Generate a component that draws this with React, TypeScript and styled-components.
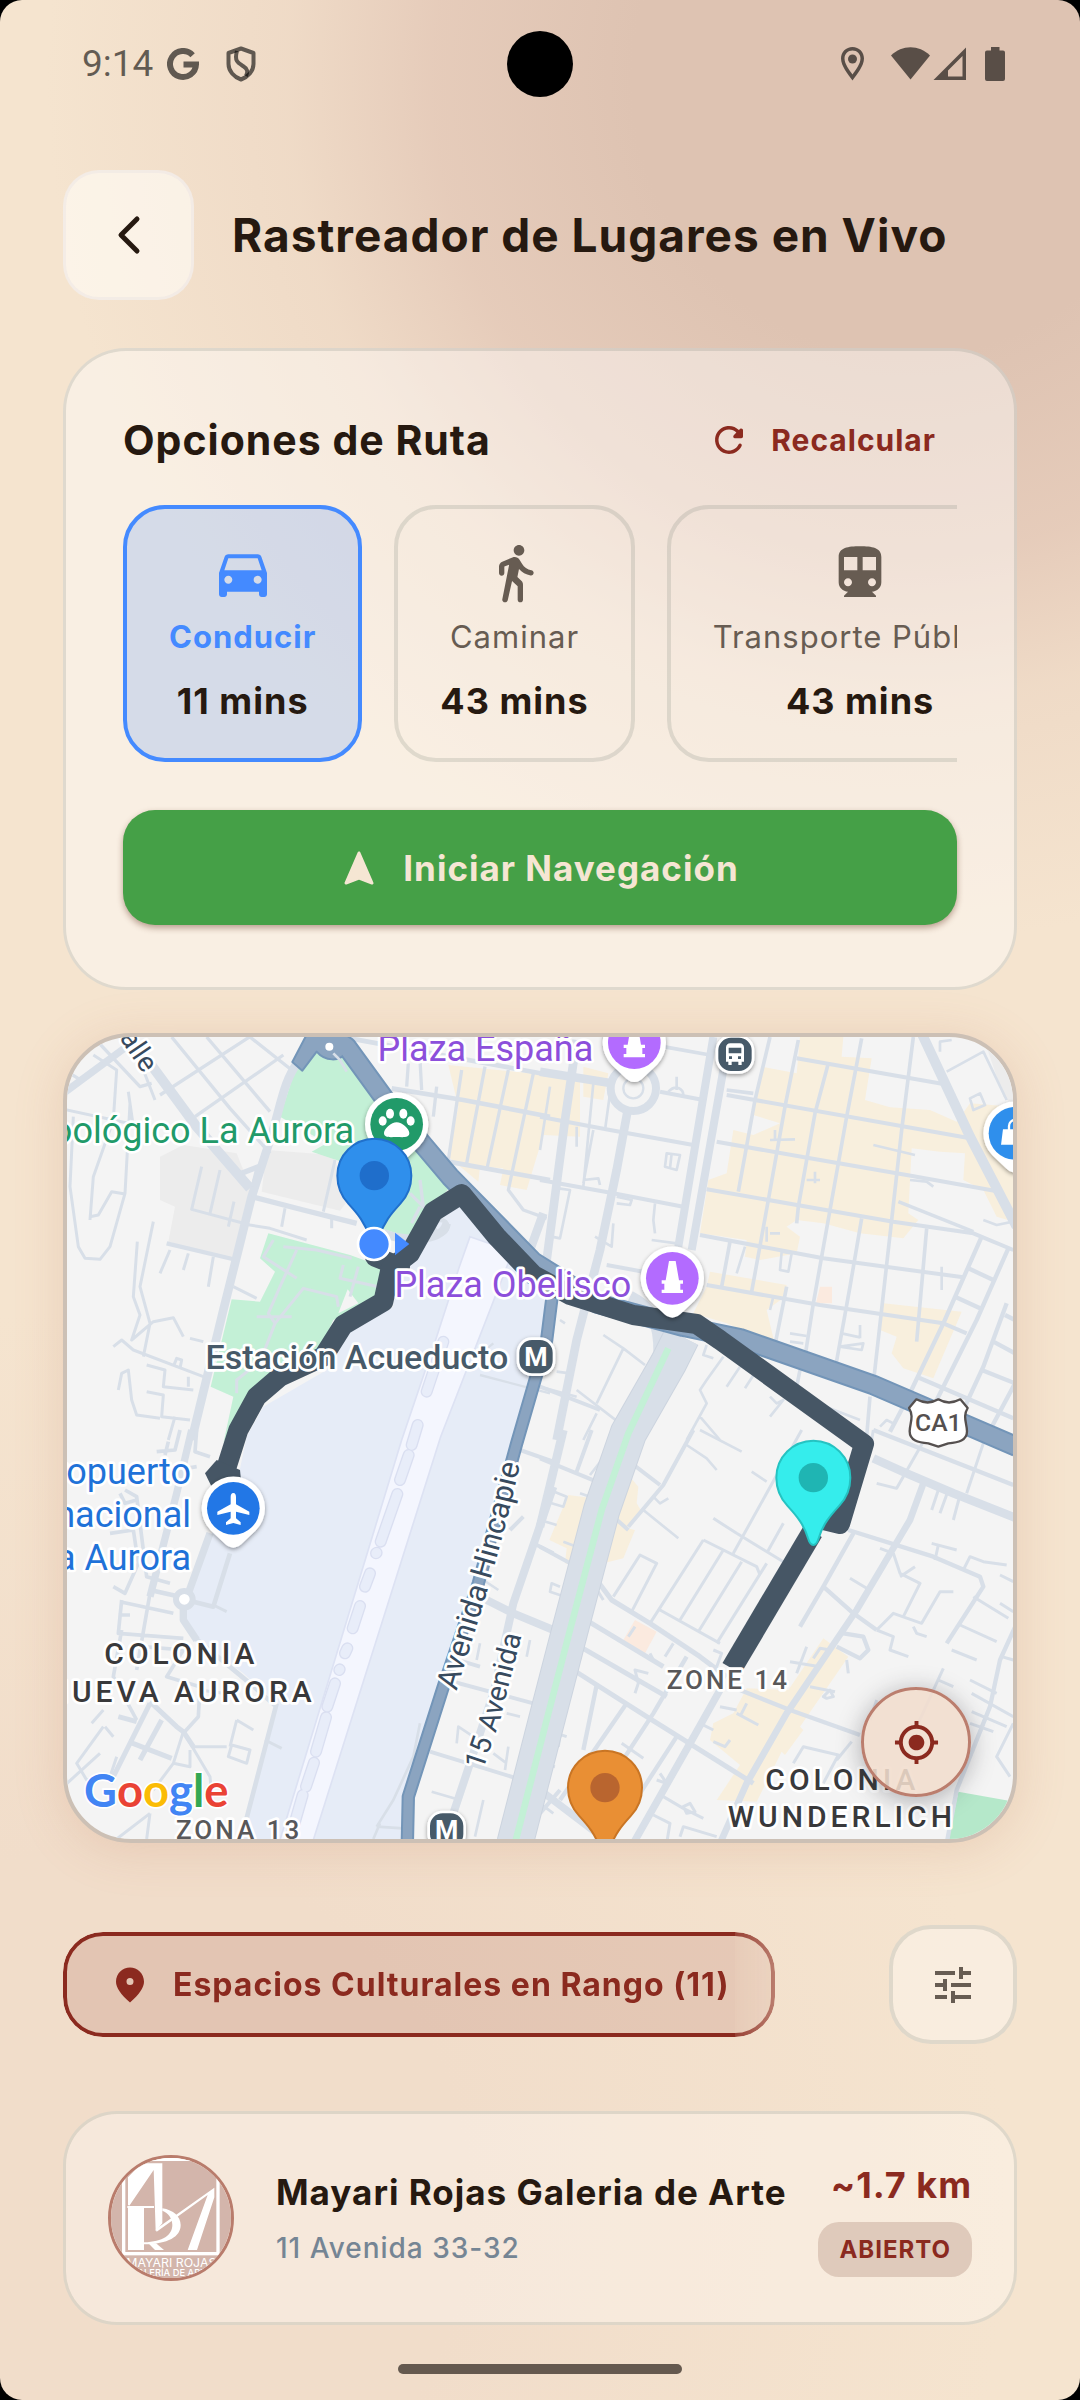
import React from "react";
import styled, { createGlobalStyle } from "styled-components";
import {
  MdDirectionsCar,
  MdDirectionsSubway,
  MdMyLocation,
  MdTune,
} from "react-icons/md";

const GlobalStyle = createGlobalStyle`
  * {
    box-sizing: border-box;
  }

  body {
    margin: 0;
    background: #000000;
  }

  button {
    font-family: inherit;
    cursor: pointer;
  }
`;

const ink = "#261910";
const brick = "#8b2a1f";
const muted = "#675c52";
const line = "rgba(120, 130, 120, 0.2)";

const Screen = styled.div`
  display: flex;
  flex-direction: column;
  min-height: 100vh;
  overflow: hidden;

  border-radius: 22px;
  background: radial-gradient(
      circle 860px at 84% 80px,
      #dec3b2 0%,
      #dec3b2 32%,
      rgba(228, 201, 184, 0.9) 55%,
      rgba(235, 212, 193, 0.6) 72%,
      rgba(245, 228, 207, 0) 100%
    ),
    radial-gradient(
      circle 900px at 10% 92%,
      #f1ddca 0%,
      #f1ddca 40%,
      rgba(245, 228, 207, 0) 100%
    ),
    #f5e4cf;
  color: ${ink};
  font-family: "Inter", "Liberation Sans", sans-serif;
`;

const StatusBar = styled.div`
  display: grid;
  grid-template-columns: 1fr auto 1fr;
  align-items: center;
  height: 128px;
  padding: 0 74px;

  color: rgba(0, 0, 0, 0.6);
`;

const StatusGroup = styled.div<{ $end?: boolean }>`
  display: flex;
  align-items: center;
  justify-content: ${(props) => (props.$end ? "flex-end" : "flex-start")};
  padding-left: 8px;
`;

const Clock = styled.span`
  margin-right: 14px;

  font-family: "Roboto", sans-serif;
  font-size: 37px;
  line-height: 44px;
`;

const CameraHole = styled.div`
  width: 66px;
  height: 66px;

  border-radius: 50%;
  background: #000000;
`;

const Header = styled.header`
  display: flex;
  align-items: center;
  gap: 38px;
  padding: 42px 63px 0;
`;

const BackButton = styled.button`
  display: flex;
  align-items: center;
  justify-content: center;
  width: 131px;
  height: 130px;
  padding: 0;

  border: 3px solid rgba(225, 220, 225, 0.3);
  border-radius: 36px;
  background: rgba(255, 252, 246, 0.64);
  color: ${ink};
`;

const PageTitle = styled.h1`
  margin: 0;

  font-size: 46px;
  font-weight: 700;
  line-height: 60px;
  letter-spacing: 1px;
`;

const Main = styled.main`
  display: flex;
  flex-direction: column;
  padding: 48px 63px 0;
`;

const OptionsCard = styled.section`
  padding: 45px 57px 62px;

  border: 3px solid ${line};
  border-radius: 63px;
  background: rgba(255, 255, 255, 0.42);
`;

const OptionsHeader = styled.div`
  display: flex;
  align-items: center;
  justify-content: space-between;
  height: 88px;
`;

const OptionsTitle = styled.h2`
  margin: 0;

  font-size: 41px;
  font-weight: 700;
  line-height: 52px;
  letter-spacing: 1px;
`;

const RecalcButton = styled.button`
  display: flex;
  align-items: center;
  gap: 21px;
  padding: 12px 21px;

  border: none;
  background: none;
  color: ${brick};
  font-size: 30px;
  font-weight: 700;
  line-height: 44px;
  letter-spacing: 1px;
`;

const ModeRow = styled.div`
  display: flex;
  gap: 32px;
  margin-top: 21px;
  overflow: hidden;
`;

const ModeButton = styled.button<{ $active: boolean }>`
  display: flex;
  flex: none;
  flex-direction: column;
  align-items: center;
  min-width: 239px;
  padding: 32px 42px 35px;

  border: 4px solid ${(props) => (props.$active ? "#448aff" : line)};
  border-radius: 42px;
  background: ${(props) =>
    props.$active ? "rgba(68, 138, 255, 0.2)" : "transparent"};
  color: ${(props) => (props.$active ? "#448aff" : muted)};
`;

const ModeLabel = styled.span<{ $active: boolean }>`
  margin-top: 10px;

  font-size: 31px;
  font-weight: ${(props) => (props.$active ? 700 : 400)};
  line-height: 44px;
  letter-spacing: 1px;
  white-space: nowrap;
`;

const ModeTime = styled.span`
  margin-top: 20px;

  color: ${ink};
  font-size: 36px;
  font-weight: 700;
  line-height: 44px;
  letter-spacing: 1px;
`;

const StartButton = styled.button`
  display: flex;
  align-items: center;
  justify-content: center;
  gap: 26px;
  width: 100%;
  height: 115px;
  margin-top: 48px;

  border: none;
  border-radius: 32px;
  background: #45a047;
  box-shadow: 0 3px 6px rgba(90, 40, 20, 0.4);
  color: #f5e6d3;
  font-size: 35px;
  font-weight: 700;
  letter-spacing: 1px;
`;

const MapFrame = styled.section`
  position: relative;
  height: 810px;
  margin-top: 43px;
  overflow: hidden;

  border: 4px solid #ccc0b5;
  border-radius: 68px;
  background: #f4f4f4;
  box-shadow: 0 6px 50px rgba(190, 120, 90, 0.2);

  > svg {
    display: block;
    width: 100%;
    height: 100%;
  }
`;

const LocateButton = styled.button`
  position: absolute;
  right: 42px;
  bottom: 42px;
  display: flex;
  align-items: center;
  justify-content: center;
  width: 110px;
  height: 110px;
  padding: 0;

  border: 3px solid #bb7e6e;
  border-radius: 50%;
  background: rgba(241, 221, 205, 0.88);
  box-shadow: 0 4px 24px rgba(40, 40, 50, 0.35);
  color: ${brick};
`;

const FilterRow = styled.div`
  display: flex;
  align-items: center;
  justify-content: space-between;
  margin-top: 82px;
`;

const RangeChip = styled.button`
  display: flex;
  align-items: center;
  gap: 22px;
  height: 105px;
  padding: 0 42px;

  border: 4px solid ${brick};
  border-radius: 40px;
  background: rgba(139, 42, 31, 0.13);
  color: ${brick};
  font-size: 32px;
  font-weight: 700;
  letter-spacing: 1px;
  mask-image: linear-gradient(
    to right,
    #000 calc(100% - 40px),
    rgba(0, 0, 0, 0.88) calc(100% - 40px),
    rgba(0, 0, 0, 0.55) 100%
  );
`;

const TuneButton = styled.button`
  display: flex;
  align-items: center;
  justify-content: center;
  width: 128px;
  height: 119px;
  padding: 0;

  border: 4px solid ${line};
  border-radius: 42px;
  background: rgba(255, 250, 246, 0.42);
  color: ${muted};
`;

const PlaceCard = styled.article`
  display: flex;
  align-items: center;
  margin-top: 67px;
  padding: 41px 42px;

  border: 3px solid ${line};
  border-radius: 54px;
  background: rgba(255, 250, 246, 0.4);
`;

const Avatar = styled.div`
  flex: none;
  width: 126px;
  height: 126px;
  overflow: hidden;

  border: 3px solid #b97c6c;
  border-radius: 50%;

  svg {
    display: block;
  }
`;

const PlaceInfo = styled.div`
  display: flex;
  flex: 1;
  flex-direction: column;
  gap: 12px;
  margin-left: 42px;
`;

const PlaceName = styled.h3`
  margin: 0;

  font-size: 35px;
  font-weight: 700;
  line-height: 48px;
  letter-spacing: 1px;
  white-space: nowrap;
`;

const PlaceAddress = styled.span`
  color: #758594;
  font-size: 28px;
  font-weight: 500;
  line-height: 40px;
  letter-spacing: 1px;
`;

const PlaceMeta = styled.div`
  display: flex;
  flex-direction: column;
  align-items: flex-end;
  gap: 15px;
  padding-top: 4px;
`;

const Distance = styled.span`
  color: ${brick};
  font-size: 36px;
  font-weight: 700;
  line-height: 44px;
  letter-spacing: 1px;
`;

const OpenBadge = styled.span`
  padding: 0 21px;

  border-radius: 21px;
  background: #dfcabb;
  color: ${brick};
  font-size: 24px;
  font-weight: 700;
  line-height: 55px;
  letter-spacing: 1px;
`;

const HomeIndicator = styled.div`
  width: 284px;
  height: 10px;
  margin: auto auto 26px;

  border-radius: 5px;
  background: #65594f;
`;

const GoogleIcon = () => (
  <svg width="32" height="33" viewBox="0 0 32 33" fill="none">
    <path
      d="M25.6 7.2A13 13 0 1 0 29 16.5H16.5"
      stroke="currentColor"
      strokeWidth="6"
    />
  </svg>
);

const ShieldIcon = () => (
  <svg
    width="30"
    height="36"
    viewBox="0 0 30 36"
    fill="none"
    stroke="currentColor"
    strokeWidth="4"
    strokeLinejoin="round"
    style={{ marginLeft: 27 }}>
    <path d="M15 2.500 27.500 7V18C27.500 25 22 31 15 33.500 8 31 2.500 25 2.500 18V7Z" />
    <path d="M11 5C8 15 12 17 17 20 22 23 22 26 20 30" />
  </svg>
);

const StatusIcons = () => (
  <svg width="165" height="34" viewBox="841 47 165 34" fill="currentColor">
    <path
      fillRule="evenodd"
      d="M852.500 47C859 47 864 52 864 58.500 864 66 857 74 852.500 80.500 848 74 841 66 841 58.500 841 52 846 47 852.500 47ZM852.500 50.500C848 50.500 844.500 54 844.500 58.500 844.500 64 849.500 70 852.500 74.500 855.500 70 860.500 64 860.500 58.500 860.500 54 857 50.500 852.500 50.500Z"
    />
    <circle cx="852.500" cy="59" r="4.500" />
    <path d="M891 55.500C902 44.500 919 44.500 930 55.500L910.500 79.500Z" />
    <path
      fillRule="evenodd"
      d="M966 47.500V80H933.500ZM962.500 56 948 70.500V76.500H962.500Z"
    />
    <path d="M991 47H999.500V50.500H1003A2 2 0 0 1 1005 52.500V79A2 2 0 0 1 1003 81H987A2 2 0 0 1 985 79V52.500A2 2 0 0 1 987 50.500H991Z" />
  </svg>
);

const ChevronIcon = () => (
  <svg width="24" height="40" viewBox="0 0 24 40" fill="none">
    <path
      d="M20 4 4 20l16 16"
      stroke="currentColor"
      strokeWidth="5"
      strokeLinecap="round"
      strokeLinejoin="round"
    />
  </svg>
);

const RefreshIcon = () => (
  <svg width="42" height="42" viewBox="0 0 24 24" fill="currentColor">
    <path d="M17.65 6.35c-1.63-1.63-3.94-2.57-6.48-2.31-3.67.37-6.69 3.35-7.1 7.02C3.520 15.910 7.270 20 12 20c3.190 0 5.930-1.870 7.210-4.560.32-.67-.16-1.440-.9-1.440-.37 0-.72.2-.88.53-1.130 2.430-3.840 3.970-6.800 3.310-2.220-.49-4.010-2.300-4.480-4.520C5.310 9.440 8.260 6 12 6c1.660 0 3.140.69 4.220 1.780l-1.510 1.510c-.63.63-.19 1.710.7 1.710H19c.55 0 1-.45 1-1V6.410c0-.89-1.080-1.340-1.710-.71l-.64.65z" />
  </svg>
);

const WalkIcon = () => (
  <svg width="64" height="64" viewBox="0 0 24 24" fill="currentColor">
    <path d="M13.500 5.500c1.100 0 2-.9 2-2s-.9-2-2-2-2 .9-2 2 .9 2 2 2zM9.800 8.900L7.240 21.810c-.13.61.35 1.190.98 1.190h.08c.47 0 .87-.32.98-.78L10.900 15l2.100 2v5c0 .55.45 1 1 1s1-.45 1-1v-5.640c0-.55-.22-1.070-.62-1.450L12.900 13.500l.6-3c1.070 1.240 2.620 2.130 4.360 2.410.6.09 1.140-.39 1.140-1 0-.49-.36-.9-.85-.98-1.520-.25-2.780-1.150-3.450-2.330l-1-1.600c-.56-.89-1.680-1.250-2.660-.84L7.220 7.780C6.480 8.100 6 8.820 6 9.620V12c0 .55.45 1 1 1s1-.45 1-1V9.600l1.800-.7z" />
  </svg>
);

const ArrowIcon = () => (
  <svg width="36" height="42" viewBox="0 0 36 42" fill="currentColor">
    <path
      d="M18 6 31 36 18 31 5 36Z"
      stroke="currentColor"
      strokeWidth="3"
      strokeLinejoin="round"
    />
  </svg>
);

const PlaceIcon = () => (
  <svg width="42" height="42" viewBox="0 0 24 24" fill="currentColor">
    <path d="M12 2c-4.200 0-8 3.220-8 8.200 0 3.320 2.670 7.250 8 11.800 5.330-4.550 8-8.480 8-11.800C20 5.220 16.200 2 12 2zm0 10a2 2 0 1 1 0-4 2 2 0 0 1 0 4z" />
  </svg>
);

const GalleryLogo = () => (
  <svg width="120" height="120" viewBox="213 204 360 360">
    <rect x="200" y="190" width="390" height="390" fill="#d3b5ab" />
    <path d="M240 195H545V213H240Z" fill="#ffffff" />
    <rect
      x="251"
      y="208"
      width="283"
      height="283"
      fill="none"
      stroke="#ffffff"
      strokeWidth="10"
    />
    <g fill="#ffffff">
      <path d="M264 345V262L305 220H367V400L347 424 341 240 268 347Z" />
      <path d="M264 352H312V480H264Z" />
      <path d="M262 348H342V354H262ZM367 355C400 360 422 380 422 405 422 440 385 462 312 463V457C370 455 397 435 397 405 397 385 385 368 367 362Z" />
      <path d="M325 460H348L372 480H345Z" />
      <path d="M523 293V322L471 480H443L503 315 350 425 347 418Z" />
    </g>
    <g fill="#ffffff" fontFamily="Inter, sans-serif" textAnchor="middle">
      <text x="394" y="531" fontSize="37">
        MAYARI ROJAS
      </text>
      <text x="394" y="558" fontSize="28" fontWeight="500">
        GALERÍA DE ARTE
      </text>
    </g>
  </svg>
);

type Street = [number, string];

// Streets are drawn per quadrant of the map: stroke width and path
const streets: { x: number; y: number; list: Street[] }[] = [
  {
    x: 0,
    y: 0,
    list: [
      [22, "M40 220 250 65"],
      [30, "M300 130 440 320 600 505"],
      [10, "M365 51 540 265 660 400M470 51 660 275M330 225 600 50M435 290 700 105M600 51 725 150M60 160 100 185M130 51 270 200 305 190"],
      [9, "M130 105 200 150 190 300 130 470 120 600M50 270 235 310M70 290 60 500 85 680 105 715 150 718 180 680 225 520 240 250M120 590 145 585 185 515 225 522M235 215 250 320M280 150 315 240"],
      [26, "M745 125C700 180 690 270 660 360L605 530 520 870 425 1260"],
      [16, "M575 460 625 440 610 500M605 530 760 570 920 610"],
      [9, "M455 440 425 568 600 615 660 625 770 660M510 450 480 580M552 545 535 620M820 575 855 420M705 565 695 620M845 590V625"],
      [13, "M350 670 560 720"],
      [9, "M360 690 330 760M415 700 400 750M490 710 475 800M310 605 270 800 300 910 280 1010M262 665 250 830 270 885 245 960 310 905 370 893 400 950M550 800 620 835M190 980 215 960 250 990 460 1070M370 1040 380 1015 395 1020 390 1045M290 1035 345 1050 340 1100 430 1110M290 1115 340 1125 335 1190 420 1200M205 1110 215 1060 235 1050 245 1140 260 1185 330 1195M375 1190 355 1260M415 1070V1100M420 955 460 965"],
      [9, "M670 660 640 710 740 775M700 680 800 690 905 715M740 690 690 800 655 880 675 910 640 1000M675 910 760 805 860 830 865 860M620 890H725M880 735 870 775 985 800M925 740 900 830M610 1040 560 1080V1120"],
      [10, "M1080 520 1120 560 1110 480M1110 560 1085 610"],
      [14, "M1025 205 1240 240 1500 290M1195 425 1500 480M900 55 1500 165"],
      [10, "M1235 150 1195 420M1305 140 1250 430M1375 150 1310 450M1450 160 1375 510 1420 570 1490 595M1110 120 1115 210M1075 130 1070 200M1160 200 1150 290"],
      [26, "M1000 640C1080 670 1180 660 1190 610M1440 690 1480 580"],
      [7, "M1290 1065 1500 1120M1330 970 1280 1010"],
    ],
  },
  {
    x: 1470,
    y: 0,
    list: [
      [26, "M0 155 215 190M110 60 75 300 20 720M265 260 230 450 180 690 110 960 50 1260"],
      [24, "M520 51 415 680M550 150 455 690"],
      [12, "M360 215 490 240M560 225 1290 355M770 115 1210 192M0 290 210 330 460 375M530 365 810 415 1100 465 1380 515M0 480 220 520 430 560M500 508 870 572 1060 605 1300 640 1420 690M480 645 850 715 1270 772M500 795 840 855 1210 910 1280 940M200 735 310 755"],
      [11, "M690 51 645 240 595 515M775 60 735 260 685 540 635 815M865 130 825 280 775 560 770 610M965 55 920 290 870 570 820 850 795 1010M1120 51 1085 330 1055 600 1000 1090M965 595 930 800 885 1050M1160 625 1130 965M740 800 705 975M570 665 545 800M1075 545 1300 635M370 80 510 105M560 210 640 220M780 1050 770 1100M990 1130 980 1250"],
      [30, "M1145 40 1290 350 1430 620"],
      [13, "M1325 650 1210 910 1100 1140 1050 1235M1405 685 1310 900 1180 1160M1285 745 1360 780M1245 830 1320 865M1130 1070 1420 1195M1400 850 1330 1040 1270 1170M1395 885 1425 900M1360 965 1425 1000M1325 1050 1425 1090M1425 1090 1345 1240"],
      [8, "M160 190 130 500M210 220 195 330M160 330 130 490M410 170V210M385 215C410 190 430 210 430 225M30 200 0 390M110 320V380M1200 95V65L1235 60M1220 155 1330 95 1400 240M1290 235 1320 220 1335 255 1300 270Z M690 360 765 358M705 330V360M1000 375 1125 405M825 455V490M800 480H840M380 400 375 440 410 450 420 405ZM395 400 390 445M130 480 175 475 180 495M345 550 340 600 345 640M55 505 90 510 60 655 35 650M230 530 275 540 270 555 230 550M335 660 410 670M615 680 590 760M680 620V665M690 640H720M725 695 720 750 745 755 755 700ZM1205 740V810M750 940 800 948M750 965 790 970M905 940 960 952M960 915V955M900 980 970 970 965 990ZM1110 480 1160 485 1180 500M1330 600 1370 615 1420 605M190 945 250 985 315 1035M250 985 170 1150M550 1010 500 1080 480 1110 500 1150 440 1260M600 1040 560 1100M650 1050 615 1105M690 1130 710 1150 730 1140 690 1190M480 1190 540 1260M0 1100 110 1130M110 1110 240 1210M170 1180 130 1260M60 900 75 910M50 1055 90 1060M500 975 490 1005 520 1015M830 1150 960 1200M1020 1220 1040 1200 1060 1210M700 830 690 870M220 610 215 680 165 650"],
      [36, "M270 830C330 860 360 900 358 1000L300 1110 225 1260"],
      [12, "M0 1100 180 1170"],
    ],
  },
  {
    x: 0,
    y: 1230,
    list: [
      [22, "M425 0 380 190 300 500M480 310 415 490M400 530 400 570 440 630"],
      [14, "M430 620 600 760 680 830M300 480 390 500M430 515 490 530 540 370M680 820 570 1240"],
      [11, "M300 490 260 720M215 510 205 610 400 625M210 515 370 550M205 555H240M190 470 225 490 265 400 250 300 180 310M390 0 375 60 320 65M355 35 345 75M440 0 435 65 480 80M210 190 225 220 260 210M225 180 260 200 290 440 360 460M380 120 440 110M215 600 190 740 260 870M280 650 400 660 350 740 450 770 445 860 400 910"],
      [15, "M300 820 180 1060M300 815 380 890 400 905 430 950M335 870 270 990M205 860 260 875M235 935 365 985"],
      [9, "M160 840 125 880M160 890 80 1000 110 1050 180 1040 200 980M165 890 190 920M400 905 370 1000 310 1080M400 905 480 1040 485 1100M430 950H530M560 870 610 900M560 870 540 950M545 945 600 960 590 1000 535 980ZM645 930 695 955M51 1060 150 970M490 525 530 545M370 1000 420 1010V960M300 1150 200 1227M300 1150 290 1227M450 780 520 790M51 1190 160 1220"],
      [24, "M1510 170 1390 520 1330 790 1210 1150M1310 510 1390 550 1510 600"],
      [12, "M1410 60 1510 95M1190 680 1290 710M1190 750 1450 820M1140 965 1400 1045M1420 260 1380 300M1450 340 1510 370"],
      [8, "M1110 880 1090 980 1030 1110 980 1190M980 1190 1060 1195M970 1227 990 1180M1145 1085 1230 1110M1300 1110 1275 1220M1375 950 1365 1020M1330 970 1370 1000M1220 940 1225 890 1270 920M1370 850 1410 860M1440 630 1430 680M1290 640 1280 690M1345 480 1300 450M1470 1120 1510 1150"],
    ],
  },
  {
    x: 1470,
    y: 1230,
    list: [
      [26, "M70 0 0 290"],
      [12, "M0 85 170 155M155 0 110 125M275 100 360 165M460 0 370 165 265 290M220 260 265 300M0 350 100 405M0 1150 60 1080"],
      [8, "M310 240 415 325M440 45 500 85 530 120M150 135 185 90M340 200 360 220 385 205M120 190 150 200M30 180 80 200 70 230 20 215M60 470 35 460 30 485 75 500M0 270 50 285M70 335 110 350M480 0 605 65M635 125 680 155"],
      [15, "M170 450 215 510 330 580 480 680 560 740M130 565 370 710M120 650 380 800M100 720 320 860 640 1060"],
      [13, "M600 780 750 840 960 915M440 680 340 850 190 1080M410 920 300 1090M260 820 60 1110M170 765 130 960"],
      [22, "M540 780 450 940 280 1240M0 1080 210 1240"],
      [9, "M490 330 330 580M550 360 420 570M605 395 475 605M680 400 530 640M490 330 650 410 660 435M360 540 540 640M590 310 730 395M785 0 580 370M730 280 680 370M520 265 590 310M220 500 300 375 350 400 275 545M265 620 285 590M375 680 400 640M330 670 340 690M520 660 545 670 530 710M285 790 295 760 285 720 325 730M165 470 190 510"],
      [26, "M1000 85 1100 130 1240 190 1430 265"],
      [20, "M1150 160 1110 270 950 540 740 850 620 1060 540 1240"],
      [13, "M940 310 850 470 940 550 1010 600M925 300 1180 380 1320 440 1330 470 1220 640M1000 0 1420 165M850 470 780 590M910 610 970 620 985 660 960 685 890 650M1430 580 1380 690 1350 830 1250 1080 1220 1240"],
      [9, "M1170 0 1070 175 1010 160M1200 165 1175 240M1225 180 1200 250M1260 195 1240 270M1330 40 1280 190M1000 0 990 60M1010 600 1060 550 1145 580 1200 485 1240 485M1060 370 1080 430 1140 460 1090 560M1125 410 1080 440M1010 600 1060 620 1050 660 1105 680M1120 590 1130 610 1160 620M1300 500 1405 565M1260 585 1370 635M1235 660 1310 690M1210 715 1130 890M1195 750 1240 770M1270 420 1290 380 1330 395 1400 405M1380 435 1420 455M1380 520 1420 545M1175 340 1250 360M1195 345 1185 390M1010 810 990 870M930 445 980 475M1020 355 1060 370M1385 680 1420 690M1290 750 1370 790M1295 790 1420 860M1295 845 1400 890M1290 880 1360 905M1420 880 1370 980 1410 1040M810 770 885 785M850 800 870 780 880 800 860 805ZM750 695 840 710M800 650 770 730M820 685 840 655 870 660M920 690 925 730M590 850 655 885M620 820 600 860M520 935 555 950 570 930M760 1000 790 950 895 975 850 1060M935 935 890 990M245 940 310 985M370 1100 430 1135 490 1165M430 1130 450 1120 465 1145 440 1150ZM340 1155 390 1180 380 1240M420 1220 430 1190 530 1220M480 880 520 900M540 830 590 840M360 1030 380 1060 350 1050M50 910 80 920M60 915 55 950M0 1000 45 1010"],
    ],
  },
];

interface PinProps {
  x: number;
  y: number;
  color: string;
  children?: React.ReactNode;
}

const PoiPin = ({ x, y, color, children }: PinProps) => (
  <g transform={`translate(${x} ${y})`}>
    <path
      d="M0 118C-12 118-22 110-30 102L-68 66A95 95 0 1 1 68 66L30 102C22 110 12 118 0 118Z"
      fill="#ffffff"
      filter="url(#drop)"
    />
    <circle r="79" fill={color} />
    <g fill="#ffffff">{children}</g>
  </g>
);

interface MarkerProps {
  x: number;
  y: number;
  fill: string;
  edge: string;
  dot: string;
}

const Marker = ({ x, y, fill, edge, dot }: MarkerProps) => (
  <g transform={`translate(${x} ${y})`}>
    <path
      d="M0 202C-8 202-13 192-16 182-28 140-50 115-78 84-100 60-111 32-111 0A111 111 0 0 1 111 0C111 32 100 60 78 84 50 115 28 140 16 182 13 192 8 202 0 202Z"
      fill={fill}
      stroke={edge}
      strokeWidth="6"
    />
    <circle r="44" fill={dot} />
  </g>
);

const StationBadge = ({ x, y, children }: Omit<PinProps, "color">) => (
  <g transform={`translate(${x} ${y})`}>
    <rect
      x="-54"
      y="-54"
      width="108"
      height="108"
      rx="42"
      fill="#475a69"
      stroke="#ffffff"
      strokeWidth="8"
      filter="url(#drop)"
    />
    {children}
  </g>
);

const MetroLetter = () => (
  <text
    y="28"
    fill="#ffffff"
    fontSize="80"
    fontWeight="700"
    textAnchor="middle">
    M
  </text>
);

const obelisk = "M-10-52H10L20 6H32V16H24V34H32V44H-32V34H-24V16H-32V6H-20Z";

const CityMap = () => (
  <svg
    viewBox="51 51 2838 2406"
    preserveAspectRatio="xMidYMid slice"
    fontFamily="Roboto, sans-serif">
    <defs>
      <filter id="drop" x="-30%" y="-30%" width="160%" height="160%">
        <feDropShadow
          dx="0"
          dy="5"
          stdDeviation="6"
          floodColor="#000000"
          floodOpacity="0.4"
        />
      </filter>
      <path id="hincapie" d="M1220 2014C1270 1840 1350 1620 1424 1270" />
      <path id="quince" d="M1298 2252 1350 2100 1424 1810" />
    </defs>

    <g fill="#ececec">
      <path d="M330 410 400 375 560 400 600 500 560 720 355 665 375 560 330 540Z" />
      <path d="M650 390 850 405 895 540 870 572 635 515Z" />
      <path d="M2800 51H2900V260L2860 230Z" />
    </g>
    <g fill="#f8efdd">
      <path d="M1195 135 1590 175V350L1480 345 1430 510 1350 495 1360 445 1290 440 1285 485 1195 410 1225 260Z" />
      <path d="M1600 140 1675 160 1660 240 1600 230Z" />
      <g transform="translate(1470 0)">
        <path d="M780 51H910L905 110 995 115 975 240 1050 262 1170 270 1250 305 1290 250 1420 260V605L1370 590 1330 510 1270 480 1275 400 1200 395 1115 385 1105 580 1135 600 1090 655 960 640 850 610 770 600 740 620 780 650 770 700 660 720 615 710 620 660 480 640 505 480 560 460 580 330 640 345 720 310 640 285 665 140 770 160Z" />
        <path d="M510 755 740 795 735 830 680 870 705 975 560 910 460 880 500 800Z" />
        <path d="M1030 850 1265 875 1180 1075 1090 1045 1055 1000 1070 950 1020 930Z" />
        <path d="M840 800H876V850H828Z" fill="#fbeadf" />
      </g>
      <g transform="translate(1470 1230)">
        <path d="M85 195 160 205 120 410 75 400 80 355 28 330Z" />
        <path d="M265 135 295 170 290 220 302 240 262 295 285 300 250 385 190 400 230 190Z" />
        <path d="M850 625 925 680 780 890 790 900 735 975 725 965 650 1115 530 1110 600 1005 510 930 520 880 580 850 620 775 745 780Z" />
        <path d="M285 570 350 605 315 670 250 630Z" fill="#fbeadf" />
      </g>
    </g>
    <g fill="#c3f0d6">
      <path d="M800 90 880 105 1110 380 1205 495 1075 650 990 625 920 440 785 395 830 370 690 290 735 150Z" />
      <path d="M655 640 900 705 1010 745 980 840 850 900 800 1010 640 1080 560 1180 520 1270 550 1130 482 1100 545 838 630 845 675 755 630 715Z" />
      <path d="M865 880 893 808 925 850Z" fill="#f4f4f4" />
      <path d="M2725 2315 2890 2345V2457H2695Z" fill="#b5e8ca" />
    </g>

    <path
      d="M1225 550 1480 790 1490 950 1400 1240 1280 1700 1060 2330V2460H570L680 2050 580 1960 440 1860 400 1800V1750L430 1700 490 1530 565 1370 590 1250 640 1160 830 1050 900 930 1030 860 1030 740 1130 640Z"
      fill="#e6ecf7"
    />
    <path
      d="M1260 650 1388 695 1172 1250 790 2460H690L1055 1260 1160 950 1228 740Z"
      fill="#f4f6fe"
      stroke="#dde2f3"
      strokeWidth="5"
    />
    {[
      ["#dadff1", 36],
      ["#e8edf9", 28],
    ].map(([stroke, width]) => (
      <path
        key={stroke}
        d="M1180 965 1130 1115M1103 1215 1085 1275M1076 1305 1050 1380M1042 1422 992 1565M980 1598 978 1600M960 1660 945 1700M930 1758 908 1825M892 1885 885 1900M869 1948 868 1950M855 1990 832 2060M828 2092 798 2195M792 2228 768 2300M758 2325 725 2440"
        fill="none"
        stroke={stroke as string}
        strokeWidth={width as number}
        strokeLinecap="round"
      />
    ))}

    {streets.map(({ x, y, list }) => (
      <g
        key={`${x}-${y}`}
        transform={`translate(${x} ${y})`}
        fill="none"
        stroke="#d8dfe8"
        strokeLinejoin="round">
        {list.map(([width, d]) => (
          <path key={d} d={d} strokeWidth={width} />
        ))}
      </g>
    ))}

    <g fill="none" stroke="#d8dfe8">
      <circle cx="1750" cy="205" r="68" strokeWidth="24" fill="#f4f4f4" />
      <circle cx="1750" cy="205" r="30" strokeWidth="7" />
      <circle cx="403" cy="1738" r="25" strokeWidth="18" fill="#ffffff" />
      <circle cx="1172" cy="620" r="20" strokeWidth="14" />
    </g>

    <g fill="none" strokeLinejoin="round">
      <path
        d="M1895 950 1855 1030 1735 1240 1655 1470 1560 1830 1490 2100 1395 2470"
        stroke="#ccd4df"
        strokeWidth="112"
      />
      <path
        d="M1895 950 1855 1030 1735 1240 1655 1470 1560 1830 1490 2100 1395 2470"
        stroke="#d8dfe8"
        strokeWidth="106"
      />
      <path
        d="M1855 985 1735 1240 1655 1470 1560 1830 1490 2100 1395 2470"
        stroke="#c3f0d6"
        strokeWidth="20"
      />
      <path
        d="M800 20 890 80 1010 245 1200 470 1450 725 1530 775 1640 850 1900 920 2070 955 2470 1095 2900 1280"
        stroke="#7395b8"
        strokeWidth="62"
      />
      <path
        d="M772 40H880L885 100C870 125 825 125 800 95L757 152 727 126Z"
        fill="#8ba4c0"
        stroke="#7395b8"
        strokeWidth="6"
      />
      <path
        d="M800 20 890 80 1010 245 1200 470 1450 725 1530 775 1640 850 1900 920 2070 955 2470 1095 2900 1280"
        stroke="#8ba4c0"
        strokeWidth="50"
      />
      <path
        d="M1510 800 1490 960 1400 1270 1285 1690 1180 2000 1075 2330 1072 2470"
        stroke="#7395b8"
        strokeWidth="40"
      />
      <path
        d="M1510 800 1490 960 1400 1270 1285 1690 1180 2000 1075 2330 1072 2470"
        stroke="#8ba4c0"
        strokeWidth="28"
      />
      <circle cx="838" cy="80" r="12" fill="#ffffff" />
      <path d="M850 100 870 120 890 155" stroke="#d8dfe8" strokeWidth="8" />
    </g>

    <g
      fill="none"
      stroke="#465665"
      strokeWidth="60"
      strokeLinejoin="round">
      <path d="M975 710 1050 740" strokeLinecap="round" />
      <path d="M518 1390 530 1340 565 1230 620 1130 690 1070 820 1010 880 915 1000 845 1022 745 1080 700 1150 575 1235 522 1340 650 1450 765 1560 825 1750 885 1940 912 2010 960 2442 1272 2370 1512 2320 1500" />
      <path d="M2288 1535 2045 1945" strokeWidth="64" />
      <path
        d="M465 1360 500 1320 570 1350 575 1400 485 1400Z"
        fill="#465665"
        stroke="none"
      />
    </g>

    <g
      stroke="#ffffff"
      strokeWidth="16"
      strokeLinejoin="round"
      paintOrder="stroke">
      <g fontSize="108">
        <text x="912" y="370" fill="#219a69" textAnchor="end">
          Zoológico La Aurora
        </text>
        <text x="1630" y="123" fill="#8c4fdb" textAnchor="end">
          Plaza España
        </text>
        <text x="1744" y="830" fill="#8c4fdb" textAnchor="end">
          Plaza Obelisco
        </text>
        <g fill="#1f72d8" textAnchor="end">
          <text x="423" y="1393">Aeropuerto</text>
          <text x="423" y="1521">Internacional</text>
          <text x="423" y="1651">La Aurora</text>
        </g>
      </g>
      <text
        x="1375"
        y="1048"
        fill="#475a69"
        fontSize="102"
        fontWeight="500"
        textAnchor="end">
        Estación Acueducto
      </text>
      <g fill="#39393b" fontSize="90" fontWeight="500" letterSpacing="12">
        <text x="163" y="1932">COLONIA</text>
        <text x="797" y="2045" textAnchor="end">
          NUEVA AURORA
        </text>
        <text x="2146" y="2310">COLONIA</text>
        <text x="2033" y="2420">WUNDERLICH</text>
      </g>
      <g fill="#58585a" fontSize="78" fontWeight="500" letterSpacing="9">
        <text x="378" y="2457">ZONA 13</text>
        <text x="1850" y="2008">ZONE 14</text>
      </g>
      <g fill="#374a5e">
        <text fontSize="92">
          <textPath href="#hincapie">Avenida Hincapie</textPath>
        </text>
        <text fontSize="86">
          <textPath href="#quince">15 Avenida</textPath>
        </text>
        <text
          fontSize="84"
          textAnchor="end"
          transform="translate(280 162) rotate(56)">
          Calle
        </text>
      </g>
    </g>

    <StationBadge x={1458} y={1010}>
      <MetroLetter />
    </StationBadge>
    <StationBadge x={1190} y={2430}>
      <MetroLetter />
    </StationBadge>
    <StationBadge x={2055} y={103}>
      <path
        fillRule="evenodd"
        fill="#ffffff"
        d="M-14-33H14C22-33 27-28 27-20V22H20V32H10V22H-10V32H-20V22H-27V-20C-27-28-22-33-14-33ZM-19-20V-3H19V-20ZM-18 6V14H-9V6ZM9 6V14H18V6Z"
      />
    </StationBadge>

    <PoiPin x={1753} y={68} color="#b36bff">
      <path d={obelisk} />
    </PoiPin>
    <PoiPin x={1867} y={775} color="#b36bff">
      <path d={obelisk} />
    </PoiPin>
    <PoiPin x={2895} y={340} color="#2f8fec">
      <path d="M-36-12H36L42 34H-42Z" />
      <path
        d="M-18-10V-22A18 18 0 0 1 18-22V-10"
        fill="none"
        stroke="#ffffff"
        strokeWidth="7"
      />
    </PoiPin>
    <PoiPin x={550} y={1465} color="#2277e6">
      <path d="M0-46C6-46 8-40 8-34V-12L48 10V20L8 10V30L22 42V50L0 44-22 50V42L-8 30V10L-48 20V10L-8-12V-34C-8-40-6-46 0-46Z" />
    </PoiPin>
    <PoiPin x={1040} y={313} color="#219a69">
      <path d="M0-6C16-6 38 14 38 26 38 42 16 38 0 38S-38 42-38 26C-38 14-16-6 0-6Z" />
      <ellipse cx="-42" cy="-10" rx="12" ry="14" />
      <ellipse cx="42" cy="-10" rx="12" ry="14" />
      <ellipse cx="-20" cy="-32" rx="12" ry="15" />
      <ellipse cx="20" cy="-32" rx="12" ry="15" />
    </PoiPin>

    <g transform="translate(2665 1210)">
      <path
        d="M-66-72C-40-58-20-60 0-72 20-60 40-58 66-72L88-46C72-20 86 0 86 24 86 52 60 58 30 60L0 70-30 60C-60 58-86 52-86 24-86 0-72-20-88-46Z"
        fill="#ffffff"
        stroke="#55504f"
        strokeWidth="7"
        strokeLinejoin="round"
      />
      <text
        y="24"
        fill="#55504f"
        fontSize="74"
        fontWeight="500"
        textAnchor="middle">
        CA1
      </text>
    </g>

    <Marker x={973} y={467} fill="#2f8fec" edge="#2170cb" dot="#1f6ecb" />
    <Marker x={2290} y={1373} fill="#35edec" edge="#25c3c2" dot="#1fb5b3" />
    <Marker x={1665} y={2303} fill="#e98f34" edge="#c97524" dot="#b9652f" />
    <circle
      cx="972"
      cy="672"
      r="48"
      fill="#448aff"
      stroke="#ffffff"
      strokeWidth="8"
    />
    <path d="M1035 638 1078 672 1035 706Z" fill="#448aff" />

    <text
      x="102"
      y="2361"
      fontFamily="Lato, sans-serif"
      fontSize="136"
      fontWeight="700"
      stroke="#ffffff"
      strokeWidth="10"
      paintOrder="stroke">
      <tspan fill="#4285f4">G</tspan>
      <tspan fill="#ea4335">o</tspan>
      <tspan fill="#fbbc05">o</tspan>
      <tspan fill="#4285f4">g</tspan>
      <tspan fill="#34a853">l</tspan>
      <tspan fill="#ea4335">e</tspan>
    </text>
  </svg>
);

const modes = [
  {
    label: "Conducir",
    time: "11 mins",
    active: true,
    icon: <MdDirectionsCar size={64} />,
  },
  { label: "Caminar", time: "43 mins", active: false, icon: <WalkIcon /> },
  {
    label: "Transporte Público",
    time: "43 mins",
    active: false,
    icon: <MdDirectionsSubway size={64} />,
  },
];

const App = () => {
  return (
    <>
      <GlobalStyle />
      <Screen>
        <StatusBar>
          <StatusGroup>
            <Clock>9:14</Clock>
            <GoogleIcon />
            <ShieldIcon />
          </StatusGroup>
          <CameraHole />
          <StatusGroup $end>
            <StatusIcons />
          </StatusGroup>
        </StatusBar>
        <Header>
          <BackButton aria-label="Volver">
            <ChevronIcon />
          </BackButton>
          <PageTitle>Rastreador de Lugares en Vivo</PageTitle>
        </Header>
        <Main>
          <OptionsCard>
            <OptionsHeader>
              <OptionsTitle>Opciones de Ruta</OptionsTitle>
              <RecalcButton>
                <RefreshIcon />
                Recalcular
              </RecalcButton>
            </OptionsHeader>
            <ModeRow>
              {modes.map(({ label, time, active, icon }) => (
                <ModeButton key={label} $active={active} aria-pressed={active}>
                  {icon}
                  <ModeLabel $active={active}>{label}</ModeLabel>
                  <ModeTime>{time}</ModeTime>
                </ModeButton>
              ))}
            </ModeRow>
            <StartButton>
              <ArrowIcon />
              Iniciar Navegación
            </StartButton>
          </OptionsCard>
          <MapFrame>
            <CityMap />
            <LocateButton aria-label="Mi ubicación">
              <MdMyLocation size={47} />
            </LocateButton>
          </MapFrame>
          <FilterRow>
            <RangeChip>
              <PlaceIcon />
              Espacios Culturales en Rango (11)
            </RangeChip>
            <TuneButton aria-label="Filtros">
              <MdTune size={48} />
            </TuneButton>
          </FilterRow>
          <PlaceCard>
            <Avatar>
              <GalleryLogo />
            </Avatar>
            <PlaceInfo>
              <PlaceName>Mayari Rojas Galeria de Arte</PlaceName>
              <PlaceAddress>11 Avenida 33-32</PlaceAddress>
            </PlaceInfo>
            <PlaceMeta>
              <Distance>~1.7 km</Distance>
              <OpenBadge>ABIERTO</OpenBadge>
            </PlaceMeta>
          </PlaceCard>
        </Main>
        <HomeIndicator />
      </Screen>
    </>
  );
};

export default App;
